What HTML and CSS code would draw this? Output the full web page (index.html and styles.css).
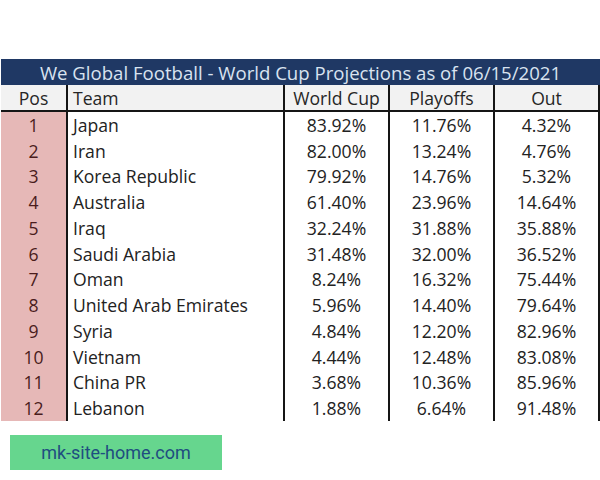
FILE: index.html
```html
<!DOCTYPE html>
<html>
<head>
<meta charset="utf-8">
<link rel="stylesheet" href="styles.css">
</head>
<body>
<div class="sheet">
  <div class="title">We Global Football - World Cup Projections as of 06/15/2021</div>
  <table class="grid">
    <colgroup>
      <col class="c-pos"><col class="c-team"><col class="c-num"><col class="c-num"><col class="c-num">
    </colgroup>
    <thead>
      <tr><th class="pos">Pos</th><th class="team">Team</th><th>World Cup</th><th>Playoffs</th><th class="last">Out</th></tr>
    </thead>
    <tbody>
      <tr><td class="pos">1</td><td class="team">Japan</td><td>83.92%</td><td>11.76%</td><td class="last">4.32%</td></tr>
      <tr><td class="pos">2</td><td class="team">Iran</td><td>82.00%</td><td>13.24%</td><td class="last">4.76%</td></tr>
      <tr><td class="pos">3</td><td class="team">Korea Republic</td><td>79.92%</td><td>14.76%</td><td class="last">5.32%</td></tr>
      <tr><td class="pos">4</td><td class="team">Australia</td><td>61.40%</td><td>23.96%</td><td class="last">14.64%</td></tr>
      <tr><td class="pos">5</td><td class="team">Iraq</td><td>32.24%</td><td>31.88%</td><td class="last">35.88%</td></tr>
      <tr><td class="pos">6</td><td class="team">Saudi Arabia</td><td>31.48%</td><td>32.00%</td><td class="last">36.52%</td></tr>
      <tr><td class="pos">7</td><td class="team">Oman</td><td>8.24%</td><td>16.32%</td><td class="last">75.44%</td></tr>
      <tr><td class="pos">8</td><td class="team">United Arab Emirates</td><td>5.96%</td><td>14.40%</td><td class="last">79.64%</td></tr>
      <tr><td class="pos">9</td><td class="team">Syria</td><td>4.84%</td><td>12.20%</td><td class="last">82.96%</td></tr>
      <tr><td class="pos">10</td><td class="team">Vietnam</td><td>4.44%</td><td>12.48%</td><td class="last">83.08%</td></tr>
      <tr><td class="pos">11</td><td class="team">China PR</td><td>3.68%</td><td>10.36%</td><td class="last">85.96%</td></tr>
      <tr><td class="pos">12</td><td class="team">Lebanon</td><td>1.88%</td><td>6.64%</td><td class="last">91.48%</td></tr>
    </tbody>
  </table>
</div>
<div class="badge">mk-site-home.com</div>
</body>
</html>
```
FILE: styles.css
```css
html, body {
  margin: 0;
  padding: 0;
  background: #ffffff;
}
body {
  font-family: "Open Sans", "Liberation Sans", sans-serif;
}
.sheet {
  margin: 59px 0 0 1px;
  width: 599px;
}
.title {
  height: 26px;
  line-height: 27px;
  background: #1f3864;
  color: #d9e3f0;
  font-size: 18.6px;
  text-align: center;
}
.grid {
  width: 598px;
  border-collapse: collapse;
  table-layout: fixed;
  font-size: 17.6px;
  color: #222222;
}
.c-pos { width: 66px; }
.c-team { width: 217px; }
.c-num { width: 105px; }
.grid th, .grid td {
  padding: 0;
  text-align: center;
  border-right: 2px solid #151515;
  white-space: nowrap;
  line-height: 22px;
}
.grid th {
  height: 24px;
  padding-top: 1px;
  background: #f2f2f2;
  font-weight: normal;
  border-bottom: 2px solid #151515;
  color: #262626;
}
.grid td {
  height: 25.75px;
  background: #ffffff;
}
.grid .team {
  text-align: left;
  padding-left: 5px;
}
.grid td.pos {
  background: #e6b8b7;
  color: #4a1c1c;
}
.grid th.pos {
  background: #f2f2f2;
}
.badge {
  margin: 14px 0 0 10px;
  width: 212px;
  height: 35px;
  line-height: 35px;
  background: #66d68e;
  color: #1f4d80;
  font-family: Roboto, "Noto Sans", sans-serif;
  font-size: 18px;
  text-align: center;
}
```
